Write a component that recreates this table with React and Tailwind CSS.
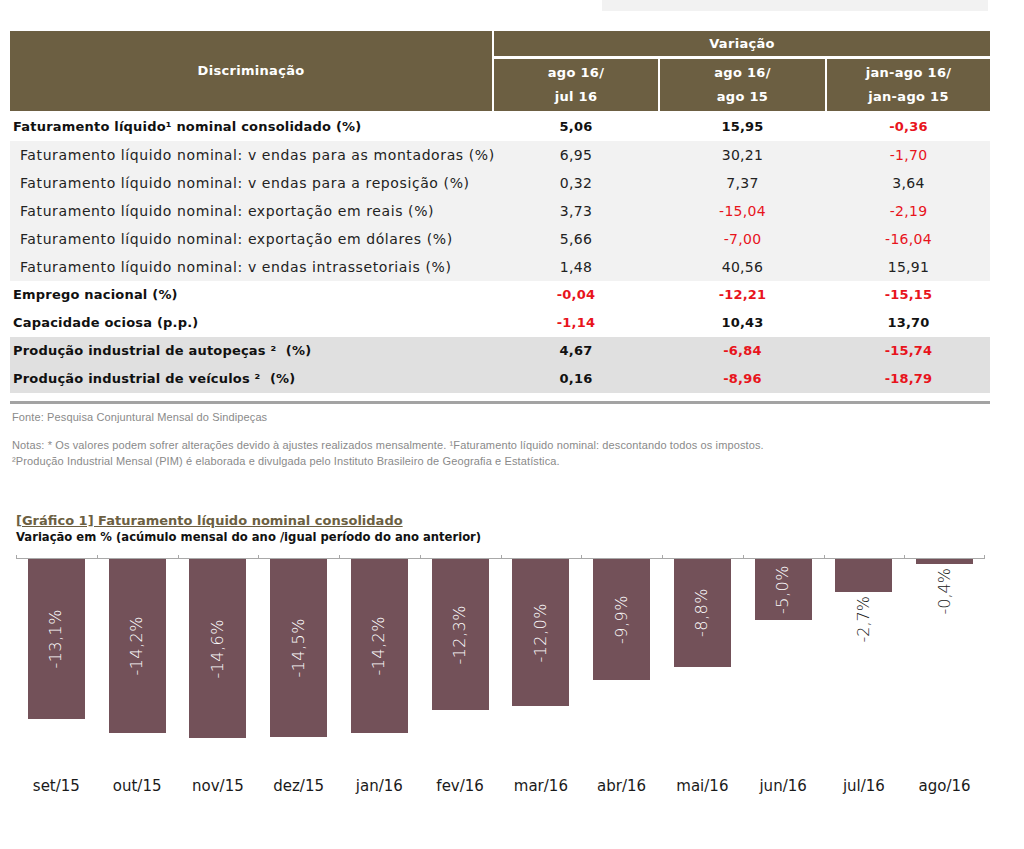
import React from "react";

const HDR = "bg-[#6c5f42]";
const RED = "text-[#e8141c]";

const rows = [
  { label: "Faturamento líquido¹ nominal consolidado (%)", v: ["5,06", "15,95", "-0,36"], bold: true, bg: "" },
  { label: "Faturamento líquido nominal: v endas para as montadoras (%)", v: ["6,95", "30,21", "-1,70"], sub: true, bg: "bg-[#f2f2f2]" },
  { label: "Faturamento líquido nominal: v endas para a reposição (%)", v: ["0,32", "7,37", "3,64"], sub: true, bg: "bg-[#f2f2f2]" },
  { label: "Faturamento líquido nominal: exportação em reais (%)", v: ["3,73", "-15,04", "-2,19"], sub: true, bg: "bg-[#f2f2f2]" },
  { label: "Faturamento líquido nominal: exportação em dólares (%)", v: ["5,66", "-7,00", "-16,04"], sub: true, bg: "bg-[#f2f2f2]" },
  { label: "Faturamento líquido nominal: v endas intrassetoriais (%)", v: ["1,48", "40,56", "15,91"], sub: true, bg: "bg-[#f2f2f2]" },
  { label: "Emprego nacional (%)", v: ["-0,04", "-12,21", "-15,15"], bold: true, bg: "" },
  { label: "Capacidade ociosa (p.p.)", v: ["-1,14", "10,43", "13,70"], bold: true, bg: "" },
  { label: "Produção industrial de autopeças ²  (%)", v: ["4,67", "-6,84", "-15,74"], bold: true, bg: "bg-[#e0e0e0]" },
  { label: "Produção industrial de veículos ²  (%)", v: ["0,16", "-8,96", "-18,79"], bold: true, bg: "bg-[#e0e0e0]" },
];

const bars = [
  ["set/15", -13.1], ["out/15", -14.2], ["nov/15", -14.6], ["dez/15", -14.5],
  ["jan/16", -14.2], ["fev/16", -12.3], ["mar/16", -12.0], ["abr/16", -9.9],
  ["mai/16", -8.8], ["jun/16", -5.0], ["jul/16", -2.7], ["ago/16", -0.4],
];

const SCALE = 12.25;

function Bar({ label, value }) {
  const h = Math.abs(value) * SCALE;
  const txt = value.toFixed(1).replace(".", ",") + "%";
  const inside = h > 50;
  return (
    <div className="flex flex-col items-center relative">
      <div className="absolute -top-[4px] left-0 w-px h-[4px] bg-[#a8a8a8]" />
      <div className="h-[216px] w-full flex flex-col items-center">
        <div className="w-[57px] bg-[#735159] relative flex items-center justify-center" style={{ height: h }}>
          {inside && (
            <span className="[writing-mode:vertical-rl] rotate-180 text-white text-[16px] font-light tracking-[0.5px] leading-none">{txt}</span>
          )}
        </div>
        {!inside && (
          <span className="mt-[4px] [writing-mode:vertical-rl] rotate-180 text-[#222] text-[16px] font-light leading-none">{txt}</span>
        )}
      </div>
      <div className="mt-[4px] text-[15px] text-[#1a1a1a] font-normal leading-none">{label}</div>
    </div>
  );
}

export default function App() {
  return (
    <div className="w-[1024px] h-[849px] bg-white relative overflow-hidden" style={{ fontFamily: "'DejaVu Sans', 'Noto Sans', sans-serif" }}>
      <div className="flex justify-end pr-[36px]">
        <div className="w-[386px] h-[11px] bg-[#f2f2f2]" />
      </div>

      <div className="ml-[10px] mt-[20px] w-[980px]">
        <div className="grid grid-cols-[482px_164px_165px_163px] gap-x-[2px] text-white font-bold text-[13px] tracking-[0.3px]">
          <div className={`${HDR} row-span-2 flex items-center justify-center h-[80px]`}>Discriminação</div>
          <div className={`${HDR} col-span-3 h-[25px] flex items-center justify-center`}>Variação</div>
          <div className={`${HDR} mt-[3px] h-[52px] flex flex-col items-center justify-center leading-[24px]`}><span>ago 16/</span><span>jul 16</span></div>
          <div className={`${HDR} mt-[3px] h-[52px] flex flex-col items-center justify-center leading-[24px]`}><span>ago 16/</span><span>ago 15</span></div>
          <div className={`${HDR} mt-[3px] h-[52px] flex flex-col items-center justify-center leading-[24px]`}><span>jan-ago 16/</span><span>jan-ago 15</span></div>
        </div>

        <div className="mt-[2px]">
          {rows.map((r, i) => (
            <div key={i} className={`grid grid-cols-[482px_164px_165px_163px] gap-x-[2px] h-[28px] items-center ${r.bg} ${r.bold ? "font-bold text-[13px] tracking-[0.2px] text-[#111]" : "text-[14px] text-[#222]"}`}>
              <div className={`whitespace-pre ${r.sub ? "pl-[10px] tracking-[0.6px]" : "pl-[3px]"}`}>{r.label}</div>
              {r.v.map((v, j) => (
                <div key={j} className={`text-center ${r.sub ? "tracking-[0.3px]" : ""} ${v.startsWith("-") ? RED : ""}`}>{v}</div>
              ))}
            </div>
          ))}
        </div>
        <div className="mt-[8px] h-[3px] bg-[#a3a3a3]" />
      </div>

      <div className="ml-[12px] mt-[6px] text-[11px] tracking-[0.12px] text-[#8a8a8a] leading-[14px]" style={{ fontFamily: "'Liberation Sans', Arial, sans-serif" }}>
        <div>Fonte: Pesquisa Conjuntural Mensal do Sindipeças</div>
        <div className="mt-[14px]">Notas: * Os valores podem sofrer alterações devido à ajustes realizados mensalmente. ¹Faturamento líquido nominal: descontando todos os impostos.</div>
        <div className="mt-[2px]">²Produção Industrial Mensal (PIM) é elaborada e divulgada pelo Instituto Brasileiro de Geografia e Estatística.</div>
      </div>

      <div className="ml-[16px] mt-[44px]">
        <div className="text-[13px] font-bold text-[#6c5f42] underline leading-[17px]">[Gráfico 1] Faturamento líquido nominal consolidado</div>
        <div className="text-[11.6px] font-bold text-[#111] leading-[16px]">Variação em % (acúmulo mensal do ano /igual período do ano anterior)</div>
        <div className="mt-[13px] w-[969px] border-t border-[#a8a8a8] grid grid-cols-12 relative">
          {bars.map(([l, v]) => <Bar key={l} label={l} value={v} />)}
          <div className="absolute -top-[4px] right-0 w-px h-[4px] bg-[#a8a8a8]" />
        </div>
      </div>
    </div>
  );
}
